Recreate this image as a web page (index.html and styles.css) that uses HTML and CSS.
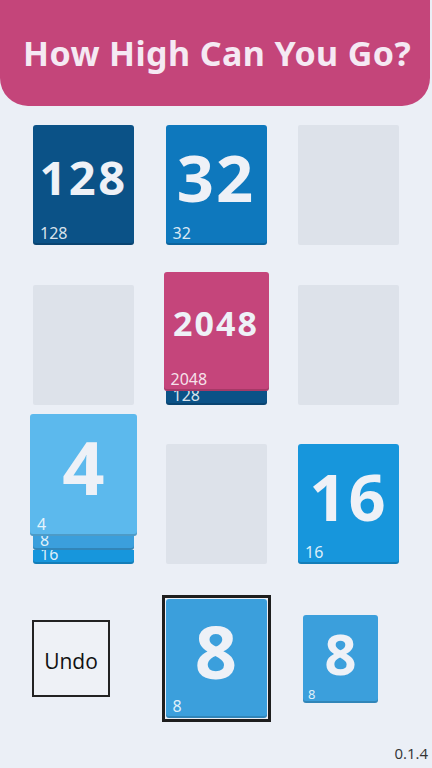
FILE: index.html
```html
<!DOCTYPE html>
<html lang="en">

<head>
  <meta charset='utf-8'>
  <title>How High Can You Go?</title>
  <link rel="stylesheet" href="styles.css">
</head>

<body>
  <div class='page'>
    <div class='banner'>
      <h1>How High Can You Go?</h1>
    </div>

    <div class='board'>
      <!-- row 1 -->
      <div class='cell'>
        <div class='tile t128'>
          <div class='num n3'>128</div>
          <div class='label'>128</div>
        </div>
      </div>
      <div class='cell'>
        <div class='tile t32'>
          <div class='num n2'>32</div>
          <div class='label'>32</div>
        </div>
      </div>
      <div class='cell'>
        <div class='empty'></div>
      </div>

      <!-- row 2 -->
      <div class='cell'>
        <div class='empty'></div>
      </div>
      <div class='cell'>
        <div class='tile t2048 lift-s'>
          <div class='num n4'>2048</div>
          <div class='label'>2048</div>
        </div>
        <div class='strip t128'><span class='label'>128</span></div>
      </div>
      <div class='cell'>
        <div class='empty'></div>
      </div>

      <!-- row 3 -->
      <div class='cell'>
        <div class='tile t4 lift-l'>
          <div class='num n1'>4</div>
          <div class='label'>4</div>
        </div>
        <div class='strip t8'><span class='label'>8</span></div>
        <div class='strip t16'><span class='label'>16</span></div>
      </div>
      <div class='cell'>
        <div class='empty'></div>
      </div>
      <div class='cell'>
        <div class='tile t16'>
          <div class='num n2'>16</div>
          <div class='label'>16</div>
        </div>
      </div>
    </div>

    <div class='tray'>
      <div class='undo'>Undo</div>
      <div class='picked'>
        <div class='tile t8'>
          <div class='num n1'>8</div>
          <div class='label'>8</div>
        </div>
      </div>
      <div class='tile t8 small'>
        <div class='num'>8</div>
        <div class='label'>8</div>
      </div>
    </div>

    <div class='version'>0.1.4</div>
  </div>
</body>

</html>
```

FILE: styles.css
```css
* {
  margin: 0;
  padding: 0;
  box-sizing: border-box;
}

body {
  background: #ebeff6;
  font-family: "Noto Sans", "Open Sans", sans-serif;
}

.page {
  width: 432px;
  height: 768px;
  display: flex;
  flex-direction: column;
  overflow: hidden;
}

.banner {
  width: 430px;
  height: 106px;
  background: #c4457a;
  border-radius: 0 0 28px 28px;
  display: flex;
  align-items: center;
  padding-left: 23px;
}

.banner h1 {
  color: #f5e9f3;
  font-size: 34px;
  font-weight: 700;
  letter-spacing: 0.4px;
  white-space: nowrap;
}

/* board */
.board {
  display: grid;
  grid-template-columns: repeat(3, 101px);
  grid-auto-rows: 120px;
  column-gap: 31.5px;
  row-gap: 39.5px;
  margin-top: 19px;
  padding-left: 33px;
}

.cell {
  height: 120px;
  display: flex;
  flex-direction: column;
  justify-content: flex-end;
}

.empty {
  height: 120px;
  flex-shrink: 0;
  background: #dde2ea;
  border-radius: 2px;
}

.tile {
  height: 120px;
  flex-shrink: 0;
  border-radius: 3px;
  display: flex;
  flex-direction: column;
  color: #eef1f7;
  box-shadow: inset 0 -2px 0 rgba(0, 0, 0, 0.16);
}

.num {
  flex: 1;
  display: flex;
  align-items: center;
  justify-content: center;
  font-weight: 700;
  line-height: 1;
  padding-top: 4px;
}

.n1 {
  font-size: 74px;
}

.n2 {
  font-size: 65px;
  letter-spacing: 2px;
}

.n3 {
  font-size: 47px;
  letter-spacing: 2.5px;
}

.n4 {
  font-size: 34px;
  letter-spacing: 2px;
}

.label {
  font-size: 16px;
  line-height: 17px;
  padding: 0 7px 3px;
  color: rgba(255, 255, 255, 0.86);
  font-weight: 400;
}

.strip {
  height: 14px;
  flex-shrink: 0;
  overflow: hidden;
  display: flex;
  flex-direction: column;
  justify-content: flex-end;
  border-radius: 0 0 3px 3px;
  box-shadow: inset 0 -2px 0 rgba(0, 0, 0, 0.16);
}

.strip .label {
  padding-bottom: 1px;
}

.lift-s {
  height: 119px;
  margin: 0 -2px;
}

.lift-l {
  height: 122px;
  margin: 0 -3px;
}

.t128 {
  background: #0b5287;
}

.t32 {
  background: #0e78bd;
}

.t2048 {
  background: #c5457b;
}

.t4 {
  background: #5cb9ed;
}

.t8 {
  background: #3b9fdc;
}

.t16 {
  background: #1796dc;
}

/* bottom row */
.tray {
  display: grid;
  grid-template-columns: repeat(3, 101px);
  column-gap: 31.5px;
  align-items: center;
  height: 127px;
  margin-top: 31px;
  padding-left: 33px;
}

.undo {
  width: 78px;
  height: 77px;
  margin-left: -1px;
  border: 2px solid #222;
  background: #eef1f6;
  display: flex;
  align-items: center;
  justify-content: center;
  font-family: "Open Sans", "Noto Sans", sans-serif;
  font-size: 21px;
  color: #111;
  padding-top: 4px;
}

.picked {
  width: 109px;
  height: 127px;
  margin-left: -4px;
  border: 3px solid #1e1e1e;
  padding: 1px;
}

.picked .tile {
  height: 119px;
}

.small {
  width: 75px;
  height: 88px;
  margin-left: 5px;
}

.small .num {
  font-size: 56px;
}

.small .label {
  font-size: 13px;
  line-height: 14px;
  padding: 0 5px 2px;
}

.version {
  margin-top: auto;
  align-self: flex-end;
  padding: 0 4px 5px 0;
  font-family: "Open Sans", "Noto Sans", sans-serif;
  font-size: 15px;
  color: #333;
}
```
